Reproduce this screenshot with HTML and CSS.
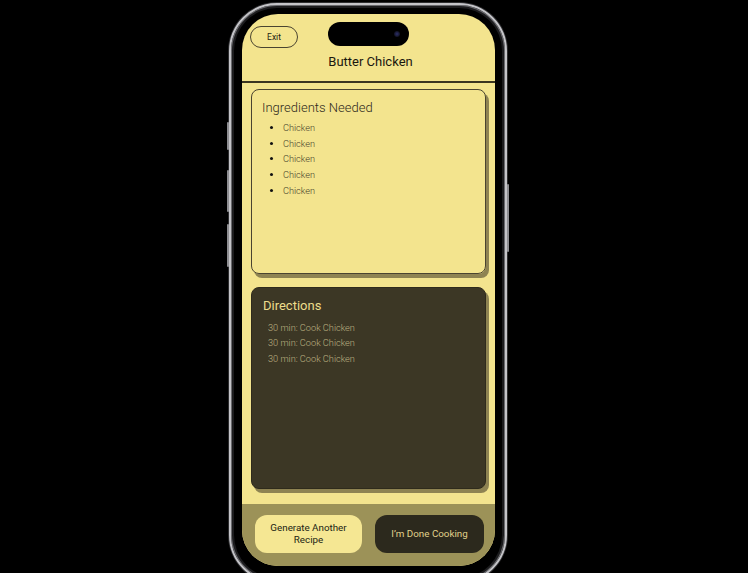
FILE: index.html
```html
<!DOCTYPE html>
<html>
<head>
<meta charset="utf-8">
<link rel="stylesheet" href="styles.css">
</head>
<body>
<div class="stage">
  <div class="phone">
    <span class="side-btn btn-action"></span>
    <span class="side-btn btn-vol-up"></span>
    <span class="side-btn btn-vol-down"></span>
    <span class="side-btn btn-power"></span>
    <div class="screen">
      <header class="header">
        <div class="island"><span class="camera"></span></div>
        <button class="exit-btn">Exit</button>
        <h1 class="title">Butter Chicken</h1>
      </header>
      <main class="content">
        <section class="card ingredients">
          <h2 class="card-title">Ingredients Needed</h2>
          <ul class="ing-list">
            <li>Chicken</li>
            <li>Chicken</li>
            <li>Chicken</li>
            <li>Chicken</li>
            <li>Chicken</li>
          </ul>
        </section>
        <section class="card directions">
          <h2 class="card-title dir-title">Directions</h2>
          <ul class="dir-list">
            <li>30 min: Cook Chicken</li>
            <li>30 min: Cook Chicken</li>
            <li>30 min: Cook Chicken</li>
          </ul>
        </section>
      </main>
      <footer class="bottom-bar">
        <button class="action light">Generate Another<br>Recipe</button>
        <button class="action dark">I’m Done Cooking</button>
      </footer>
    </div>
  </div>
</div>
</body>
</html>
```

FILE: styles.css
```css
* { box-sizing: border-box; }
html, body { margin: 0; padding: 0; background: #000; }
body { width: 748px; height: 573px; overflow: hidden; font-family: Roboto, "Liberation Sans", sans-serif; }

.stage { padding-left: 229px; padding-top: 3px; }

.phone {
  position: relative;
  width: 278px;
  height: 580px;
  padding: 9px 10px 0 11px;
  background: #000;
  border: 2px solid #c4c4c8;
  border-radius: 48px;
  box-shadow: inset 0 0 0 1px #6a6a6e, inset 0 0 0 3px #1c1c1e, 0 0 0 1px #2e2e30;
}

.side-btn {
  position: absolute;
  width: 2px;
  background: #8e8e92;
  border-radius: 1px;
}
.btn-action { left: -4px; top: 117px; height: 28px; }
.btn-vol-up { left: -4px; top: 165px; height: 42px; }
.btn-vol-down { left: -4px; top: 219px; height: 43px; }
.btn-power { right: -4px; top: 179px; height: 68px; }

.screen {
  width: 253px;
  height: 552px;
  background: #f3e48e;
  border-radius: 36px;
  overflow: hidden;
  display: flex;
  flex-direction: column;
}

.header {
  position: relative;
  height: 69px;
  flex-shrink: 0;
  border-bottom: 2px solid #3a3520;
  padding: 12px 0 0 8px;
}
.island {
  position: absolute;
  left: 86px;
  top: 8px;
  width: 81px;
  height: 24px;
  background: #000;
  border-radius: 12px;
}
.camera {
  position: absolute;
  right: 9px;
  top: 9px;
  width: 6px;
  height: 6px;
  border-radius: 50%;
  background: radial-gradient(circle, #2c2f6a 0%, #15162c 60%, #000 100%);
}
.exit-btn {
  display: block;
  width: 48px;
  height: 22px;
  margin: 0;
  padding: 0;
  border: 1px solid #4a4430;
  border-radius: 11px;
  background: transparent;
  font-family: Roboto, "Liberation Sans", sans-serif;
  font-size: 8.5px;
  color: #1f1c12;
}
.title {
  margin: 6px 0 0 -8px;
  text-align: center;
  font-size: 13px;
  font-weight: 400;
  line-height: 16px;
  color: #1a170e;
  padding-left: 4px;
}

.content {
  flex: 1;
  padding: 6px 9px 0 9px;
  display: flex;
  flex-direction: column;
  gap: 13px;
}
.card {
  width: 235px;
  border-radius: 8px;
  border: 1px solid #4a4430;
  box-shadow: 3px 4px 0 #8e8352;
}
.ingredients {
  height: 185px;
  padding: 9px 10px 8px;
}
.card-title {
  margin: 0;
  font-size: 13px;
  font-weight: 300;
  line-height: 18px;
  color: #2e2a1c;
}
.ing-list {
  margin: 3px 0 0 0;
  padding-left: 21px;
  list-style: disc;
  font-size: 9.2px;
  font-weight: 300;
  line-height: 15.7px;
  color: #443e2a;
}
.ing-list li::marker { color: #111; }

.directions {
  height: 202px;
  background: #3c3725;
  border-color: #2f2b1c;
  padding: 9px 11px;
}
.dir-title {
  font-weight: 400;
  color: #eddd8c;
}
.dir-list {
  margin: 5px 0 0 0;
  padding-left: 5px;
  list-style: none;
  font-size: 9.2px;
  font-weight: 300;
  line-height: 15.4px;
  color: #bdb283;
}

.bottom-bar {
  height: 62px;
  flex-shrink: 0;
  background: #9c9258;
  display: flex;
  gap: 13px;
  padding: 11px 11px 0 13px;
}
.action {
  height: 38px;
  margin: 0;
  padding: 0;
  border: none;
  border-radius: 12px;
  font-family: Roboto, "Liberation Sans", sans-serif;
  font-size: 9.8px;
  line-height: 12px;
}
.action.light {
  width: 107px;
  background: #f5e793;
  color: #211e14;
}
.action.dark {
  width: 109px;
  background: #2c291d;
  color: #e0d28c;
}
```
